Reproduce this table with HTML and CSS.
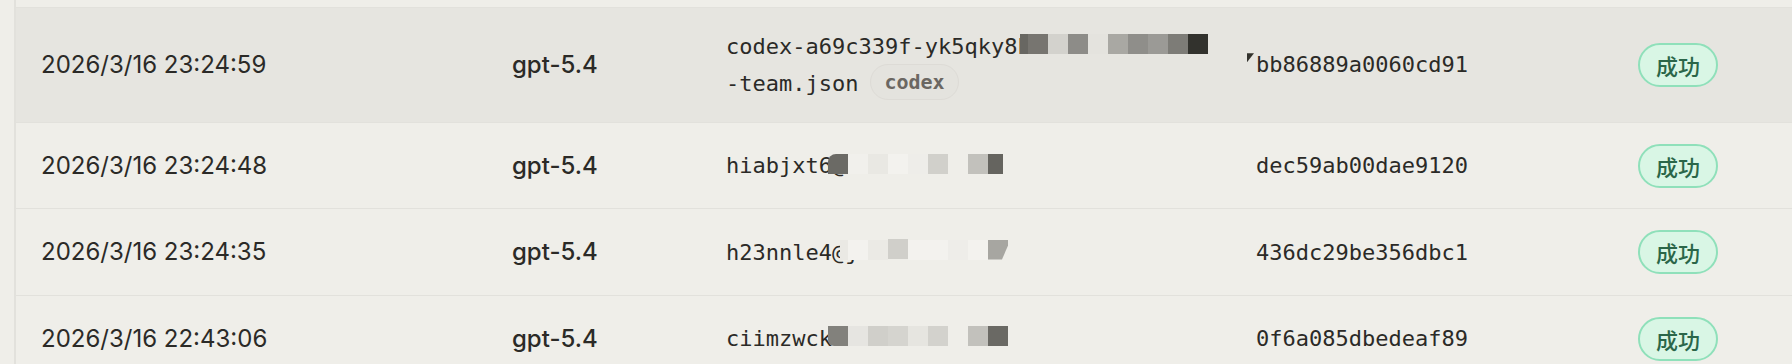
FILE: index.html
```html
<!DOCTYPE html>
<html lang="zh">
<head>
<meta charset="utf-8">
<title>Logs</title>
<link rel="stylesheet" href="styles.css">
</head>
<body>
<div class="table">
  <div class="row prev"></div>

  <div class="row hover">
    <div class="cell date">2026/3/16 23:24:59</div>
    <div class="cell model">gpt-5.4</div>
    <div class="cell file">
      <span class="line">codex-a69c339f-yk5qky8b<span class="mosaic r1"><i class="b8 c1"></i><i class="c2"></i><i class="c3"></i><i class="c4"></i><i class="c5"></i><i class="c6"></i><i class="c7"></i><i class="c8"></i><i class="c9"></i><i class="c10"></i></span></span>
      <span class="line">-team.json<span class="tag">codex</span></span>
    </div>
    <div class="cell hash"><span class="tri"></span>bb86889a0060cd91</div>
    <div class="cell status"><span class="ok">成功</span></div>
  </div>

  <div class="row">
    <div class="cell date">2026/3/16 23:24:48</div>
    <div class="cell model">gpt-5.4</div>
    <div class="cell file">
      <span class="line">hiabjxt6@<span class="mosaic r2"><i class="d1 rl"></i><i class="d2"></i><i class="d3"></i><i class="d4"></i><i class="d5"></i><i class="d6"></i><i class="none"></i><i class="d7"></i><i class="d8 b15"></i></span></span>
    </div>
    <div class="cell hash">dec59ab00dae9120</div>
    <div class="cell status"><span class="ok">成功</span></div>
  </div>

  <div class="row">
    <div class="cell date">2026/3/16 23:24:35</div>
    <div class="cell model">gpt-5.4</div>
    <div class="cell file">
      <span class="line">h23nnle4@j<span class="mosaic r3"><i class="b8 e0"></i><i class="e1"></i><i class="e2"></i><i class="e3 up"></i><i class="e1"></i><i class="e1"></i><i class="e4"></i><i class="e1"></i><i class="e5 cut"></i></span></span>
    </div>
    <div class="cell hash">436dc29be356dbc1</div>
    <div class="cell status"><span class="ok">成功</span></div>
  </div>

  <div class="row">
    <div class="cell date">2026/3/16 22:43:06</div>
    <div class="cell model">gpt-5.4</div>
    <div class="cell file">
      <span class="line">ciimzwck<span class="mosaic r4"><i class="f1 rb"></i><i class="f2"></i><i class="f3"></i><i class="f4"></i><i class="f5"></i><i class="f6"></i><i class="none"></i><i class="f7"></i><i class="f8"></i></span></span>
    </div>
    <div class="cell hash">0f6a085dbedeaf89</div>
    <div class="cell status"><span class="ok">成功</span></div>
  </div>
</div>
</body>
</html>
```
FILE: styles.css
```css
html, body {
  margin: 0;
  padding: 0;
  background: #efeee9;
}
body {
  font-family: Inter, "Noto Sans CJK SC", sans-serif;
  color: #2b2a27;
  overflow: hidden;
}
.table {
  margin-left: 14px;
  border-left: 2px solid #e2e1dc;
  min-height: 364px;
}
.row {
  display: grid;
  grid-template-columns: 471px 214px 530px 382px 1fr;
  align-items: center;
  padding: 20.75px 0;
  border-bottom: 1px solid #e2e1dc;
}
.row.prev {
  padding: 0;
  height: 7px;
}
.row.hover {
  background: #e6e5e0;
}
.cell {
  padding-left: 25px;
  position: relative;
}
.date {
  font-size: 24px;
  font-weight: 400;
  line-height: 1.4;
}
.model {
  font-size: 24px;
  font-weight: 500;
  line-height: 1.4;
}
.file, .hash {
  font-family: "DejaVu Sans Mono", monospace;
  font-size: 22px;
  line-height: 1.6;
}
.line {
  display: block;
  position: relative;
  white-space: nowrap;
}
.tag {
  display: inline-block;
  vertical-align: 2px;
  margin-left: 12px;
  height: 34px;
  line-height: 34px;
  padding: 0 13px;
  border: 1px solid #dddbd6;
  border-radius: 18px;
  background: #e4e3de;
  color: #6b6762;
  font-family: "DejaVu Sans Mono", monospace;
  font-weight: 700;
  font-size: 20px;
}
.tri {
  position: absolute;
  left: 16px;
  top: 6px;
  width: 7px;
  height: 9px;
  background: #33322d;
  clip-path: polygon(0 0, 100% 0, 0 100%);
}
.ok {
  display: inline-flex;
  align-items: center;
  justify-content: center;
  box-sizing: border-box;
  width: 80px;
  height: 44px;
  border: 2px solid #8fe0ba;
  border-radius: 22px;
  background: #d9f6e5;
  color: #2b6649;
  font-family: "Noto Sans CJK SC", sans-serif;
  font-weight: 500;
  font-size: 22px;
}

/* redaction mosaic */
.mosaic {
  position: absolute;
  top: 5px;
  display: flex;
  height: 20px;
}
.mosaic i {
  display: block;
  width: 20px;
  height: 20px;
}
.mosaic i.b8 { width: 8px; }
.mosaic i.b15 { width: 15px; }
.mosaic.r1 { left: 294px; }
.mosaic.r2 { left: 102px; top: 6px; }
.mosaic.r3 { left: 114px; }
.mosaic.r4 { left: 102px; }
.rl { border-top-left-radius: 8px; }
.rb { border-bottom-left-radius: 6px; }
.up { margin-top: -1px; }
.cut { clip-path: polygon(0 0, 100% 0, 100% 30%, 70% 100%, 0 100%); }
.none { background: transparent; }

.c1 { background: #686762; }
.c2 { background: #777570; }
.c3 { background: #d3d2cd; }
.c4 { background: #8d8c88; }
.c5 { background: #e4e3de; }
.c6 { background: #a9a8a3; }
.c7 { background: #8f8e8a; }
.c8 { background: #9b9a96; }
.c9 { background: #7d7c77; }
.c10 { background: #32322d; }

.d1 { background: #6b6a65; }
.d2 { background: #f1f0ec; }
.d3 { background: #e9e8e3; }
.d4 { background: #f3f2ee; }
.d5 { background: #eeede9; }
.d6 { background: #d1d0cb; }
.d7 { background: #c2c1bc; }
.d8 { background: #65645f; }

.e0 { background: #eae9e4; }
.e1 { background: #f3f2ee; }
.e2 { background: #ebeae5; }
.e3 { background: #d0cfca; }
.e4 { background: #eeede9; }
.e5 { background: #a7a6a1; }

.f1 { background: #82817c; }
.f2 { background: #e6e5e1; }
.f3 { background: #d0cfca; }
.f4 { background: #d5d4cf; }
.f5 { background: #e6e5e0; }
.f6 { background: #d3d2cd; }
.f7 { background: #c2c1bc; }
.f8 { background: #6a6964; }
```
